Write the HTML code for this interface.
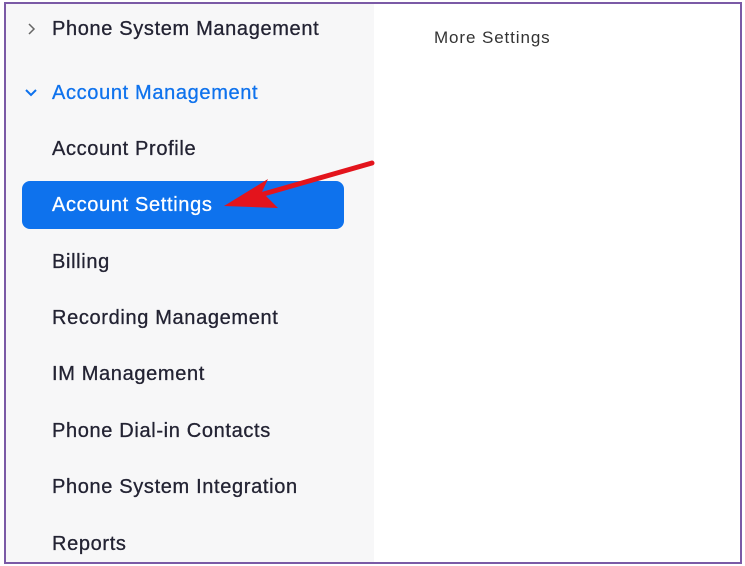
<!DOCTYPE html>
<html><head><style>
body{margin:0;width:745px;height:566px;background:#fff;position:relative;overflow:hidden;font-family:"Liberation Sans",sans-serif}
.frame{position:absolute;left:4px;top:2px;width:734px;height:558px;border:2px solid #7b5aa6}
.side{position:absolute;left:6px;top:4px;width:368px;height:558px;background:#f7f7f8}
.it{position:absolute;left:52px;font-size:20px;letter-spacing:0.65px;color:#232333;line-height:24px;white-space:nowrap;-webkit-text-stroke:0.3px currentColor}
.btn{position:absolute;left:22px;top:181px;width:322px;height:48px;background:#0e72ed;border-radius:8px}
</style></head><body>
<div class="side"></div>
<div class="btn"></div>
<div class="frame"></div>
<svg style="position:absolute;left:27px;top:23px" width="10" height="12"><path d="M2 1 L7 6 L2 11" fill="none" stroke="#666" stroke-width="1.5"/></svg>
<div class="it" style="top:17px">Phone System Management</div>
<svg style="position:absolute;left:25px;top:88px" width="12" height="10"><path d="M1 2 L6 7 L11 2" fill="none" stroke="#0e72ed" stroke-width="2"/></svg>
<div class="it" style="top:81px;color:#0e72ed">Account Management</div>
<div class="it" style="top:137px">Account Profile</div>
<div class="it" style="top:193px;color:#fff">Account Settings</div>
<div class="it" style="top:250px">Billing</div>
<div class="it" style="top:306px">Recording Management</div>
<div class="it" style="top:362px">IM Management</div>
<div class="it" style="top:419px">Phone Dial-in Contacts</div>
<div class="it" style="top:475px">Phone System Integration</div>
<div class="it" style="top:532px">Reports</div>
<div class="it" style="left:434px;top:26px;font-size:17px;letter-spacing:0.9px;color:#333;-webkit-text-stroke:0">More Settings</div>
<svg style="position:absolute;left:0;top:0" width="745" height="566">
<line x1="372" y1="163" x2="260" y2="195" stroke="#e3141c" stroke-width="5" stroke-linecap="round"/>
<path d="M224 206 L268 179 L262 192 L278 208 Z" fill="#e3141c"/>
</svg>
</body></html>
